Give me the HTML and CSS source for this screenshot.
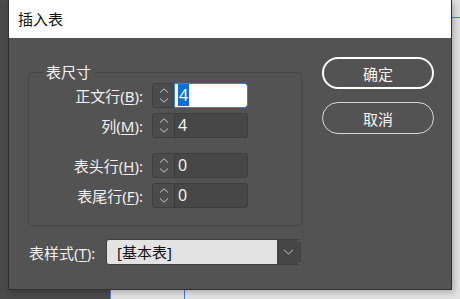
FILE: index.html
```html
<!DOCTYPE html>
<html lang="zh-CN">
<head>
  <meta charset="UTF-8">
  <meta name="viewport" content="width=device-width, initial-scale=1.0">
  <title>插入表</title>
  <link rel="stylesheet" href="styles.css">
</head>
<body>

  <div class="dialog">
    <div class="titlebar">插入表</div>

    <div class="dialog-body">
      <div class="left-col">
        <fieldset class="group">
          <legend>表尺寸</legend>

          <div class="field">
            <label for="body-rows">正文行(<u>B</u>):</label>
            <div class="spinner focused">
              <span class="spin-btns">
                <svg width="10" height="5" viewBox="0 0 10 5"><polyline points="1,4.5 5,0.8 9,4.5" /></svg>
                <svg width="10" height="5" viewBox="0 0 10 5"><polyline points="1,0.5 5,4.2 9,0.5" /></svg>
              </span>
              <span class="spin-value" id="body-rows"><span class="sel">4</span></span>
            </div>
          </div>

          <div class="field">
            <label for="cols">列(<u>M</u>):</label>
            <div class="spinner">
              <span class="spin-btns">
                <svg width="10" height="5" viewBox="0 0 10 5"><polyline points="1,4.5 5,0.8 9,4.5" /></svg>
                <svg width="10" height="5" viewBox="0 0 10 5"><polyline points="1,0.5 5,4.2 9,0.5" /></svg>
              </span>
              <span class="spin-value" id="cols">4</span>
            </div>
          </div>

          <div class="field spaced">
            <label for="head-rows">表头行(<u>H</u>):</label>
            <div class="spinner">
              <span class="spin-btns">
                <svg width="10" height="5" viewBox="0 0 10 5"><polyline points="1,4.5 5,0.8 9,4.5" /></svg>
                <svg width="10" height="5" viewBox="0 0 10 5"><polyline points="1,0.5 5,4.2 9,0.5" /></svg>
              </span>
              <span class="spin-value" id="head-rows">0</span>
            </div>
          </div>

          <div class="field">
            <label for="foot-rows">表尾行(<u>F</u>):</label>
            <div class="spinner">
              <span class="spin-btns">
                <svg width="10" height="5" viewBox="0 0 10 5"><polyline points="1,4.5 5,0.8 9,4.5" /></svg>
                <svg width="10" height="5" viewBox="0 0 10 5"><polyline points="1,0.5 5,4.2 9,0.5" /></svg>
              </span>
              <span class="spin-value" id="foot-rows">0</span>
            </div>
          </div>
        </fieldset>

        <div class="style-row">
          <label for="table-style">表样式(<u>T</u>):</label>
          <div class="select" id="table-style">
            <span class="select-value">[基本表]</span>
            <span class="select-btn">
              <svg width="11" height="6" viewBox="0 0 11 6"><polyline points="1,0.8 5.5,5 10,0.8" /></svg>
            </span>
          </div>
        </div>
      </div>

      <div class="right-col">
        <button class="btn btn-primary">确定</button>
        <button class="btn">取消</button>
      </div>
    </div>
  </div>

</body>
</html>
```

FILE: styles.css
```css
body {
  margin: 0;
  padding: 0;
  height: 299px;
  overflow: hidden;
  font-family: "Noto Sans", "Noto Sans CJK SC", sans-serif;
  background-color: #e1e1e1;
  background-image:
    linear-gradient(to right, #4a4a4a 110px, #5b78e3 110px, #5b78e3 111px, transparent 111px),
    linear-gradient(to right, transparent 184px, #3f7be6 184px, #3f7be6 185px, transparent 185px),
    linear-gradient(to bottom, transparent 17px, #4a86e8 17px, #4a86e8 18px, transparent 18px);
  background-size: 100% 100%, 100% 100%, 100% 100%;
  background-position: 0 290px, 0 0, 0 0;
  background-repeat: no-repeat;
}

body::before {
  content: "";
  position: absolute;
  left: 0;
  top: 0;
  width: 8px;
  height: 299px;
  background: #4a4a4a;
}

.dialog {
  position: relative;
  margin-left: 8px;
  width: 444px;
  height: 290px;
  box-sizing: border-box;
  border: 1px solid #2f2f2f;
  border-top: none;
  background: #535353;
  box-shadow: 2px 2px 6px rgba(0, 0, 0, 0.25);
}

.titlebar {
  height: 38px;
  background: #ffffff;
  color: #111111;
  font-size: 15px;
  line-height: 38px;
  padding-left: 9px;
}

.dialog-body {
  display: grid;
  grid-template-columns: 274px 112px;
  column-gap: 20px;
  padding: 19px 0 0 19px;
}

.left-col {
  margin-top: 5px;
}

.group {
  margin: 0;
  padding: 1px 0 18px 0;
  height: 164px;
  box-sizing: border-box;
  border: 1px solid #474747;
  border-radius: 3px;
  min-width: 0;
}

.group legend {
  margin-left: 14px;
  padding: 0 3px;
  font-size: 15px;
  line-height: 20px;
  color: #f2f2f2;
}

.field {
  display: grid;
  grid-template-columns: 114px 96px;
  column-gap: 9px;
  align-items: center;
  height: 25px;
  margin-top: 5px;
}

.field:first-of-type {
  margin-top: 0;
}

.field.spaced {
  margin-top: 15px;
}

label {
  text-align: right;
  font-size: 15px;
  color: #f0f0f0;
  white-space: nowrap;
}

label u {
  text-underline-offset: 2px;
}

.spinner {
  display: flex;
  height: 25px;
  box-sizing: border-box;
  border: 1px solid #3e3e3e;
  border-radius: 3px;
  background: #474747;
}

.spin-btns {
  width: 21px;
  display: flex;
  flex-direction: column;
  align-items: center;
  justify-content: center;
  gap: 5px;
  border-right: 1px solid #3a3a3a;
  background: #4c4c4c;
  border-radius: 2px 0 0 2px;
}

.spin-btns svg polyline,
.select-btn svg polyline {
  fill: none;
  stroke: #c8c8c8;
  stroke-width: 1;
}

.spin-value {
  flex: 1;
  padding-left: 3px;
  font-size: 16px;
  line-height: 23px;
  color: #f2f2f2;
}

.focused .spin-value {
  background: #ffffff;
  outline: 1px solid #3b7ed6;
  color: #ffffff;
  border-radius: 0 2px 2px 0;
}

.sel {
  background: #0a6fd9;
  padding: 0 1px;
}

.style-row {
  display: grid;
  grid-template-columns: 70px 195px;
  column-gap: 8px;
  align-items: center;
  margin-top: 13px;
}

.style-row label {
  text-align: left;
  padding-left: 1px;
}

.select {
  display: flex;
  height: 26px;
  box-sizing: border-box;
  border: 1px solid #404040;
  border-radius: 3px;
  background: #e3e3e3;
  overflow: hidden;
}

.select-value {
  flex: 1;
  padding-left: 10px;
  font-size: 15px;
  line-height: 24px;
  color: #111111;
}

.select-btn {
  width: 23px;
  display: flex;
  align-items: center;
  justify-content: center;
  background: #464646;
}

.right-col {
  display: flex;
  flex-direction: column;
  gap: 13px;
}

.btn {
  height: 32px;
  border: 1px solid #d8d8d8;
  border-radius: 16px;
  background: transparent;
  color: #f4f4f4;
  font-family: "Noto Sans CJK SC", sans-serif;
  font-size: 15px;
  padding: 0;
}

.btn-primary {
  border: 2px solid #ffffff;
}
```
